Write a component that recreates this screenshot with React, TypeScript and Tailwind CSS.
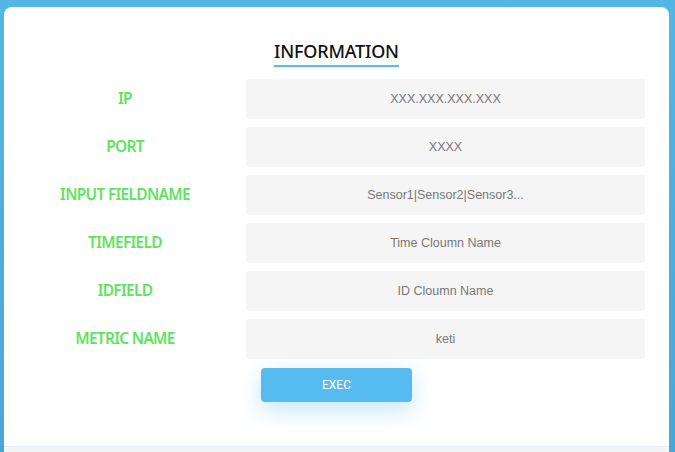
const fields = [
  { label: "IP", placeholder: "XXX.XXX.XXX.XXX" },
  { label: "PORT", placeholder: "XXXX" },
  { label: "INPUT FIELDNAME", placeholder: "Sensor1|Sensor2|Sensor3..." },
  { label: "TIMEFIELD", placeholder: "Time Cloumn Name" },
  { label: "IDFIELD", placeholder: "ID Cloumn Name" },
  { label: "METRIC NAME", placeholder: "keti" },
];

export default function App() {
  return (
    <div className="h-[452px] w-full overflow-hidden bg-gradient-to-b from-[#55b6e6] to-[#4aa6d6] px-[4px] pt-[7px] pr-[6px]">
      <div className="flex h-full flex-col rounded-t-[8px] bg-white">
        <div className="flex h-[439px] flex-col">
          {/* Title */}
          <div className="flex h-[60px] items-end justify-center">
            <h2 className="border-b-2 border-[#5ab8ea] pb-[3px] font-['Noto_Sans',sans-serif] text-[18px] leading-[22px] font-medium tracking-[-0.2px] text-[#111]">
              INFORMATION
            </h2>
          </div>

          {/* Fields */}
          <div className="mt-[12px] flex flex-col gap-[8px] pr-[24px]">
            {fields.map((f) => (
              <div key={f.label} className="flex items-center">
                <label className="w-[242px] text-center font-['Noto_Sans',sans-serif] text-[15.5px] font-semibold tracking-[-0.7px] text-[#5ee35e]">
                  {f.label}
                </label>
                <input
                  placeholder={f.placeholder}
                  className="h-[40px] flex-1 rounded-[4px] bg-[#f5f5f5] text-center font-['Liberation_Sans',Arial,sans-serif] text-[12.5px] text-[#555] outline-none placeholder:text-[#787878]"
                />
              </div>
            ))}
          </div>

          {/* Button */}
          <div className="mt-[9px] flex justify-center">
            <button className="h-[34px] w-[151px] rounded-[4px] bg-[#56bbee] font-['Roboto',sans-serif] text-[12px] font-normal text-white shadow-[0_8px_22px_rgba(86,187,238,0.35)]">
              EXEC
            </button>
          </div>
        </div>

        {/* Next section edge */}
        <div className="flex-1 border-t border-[#e6edf2] bg-[#f3f4f6]" />
      </div>
    </div>
  );
}
